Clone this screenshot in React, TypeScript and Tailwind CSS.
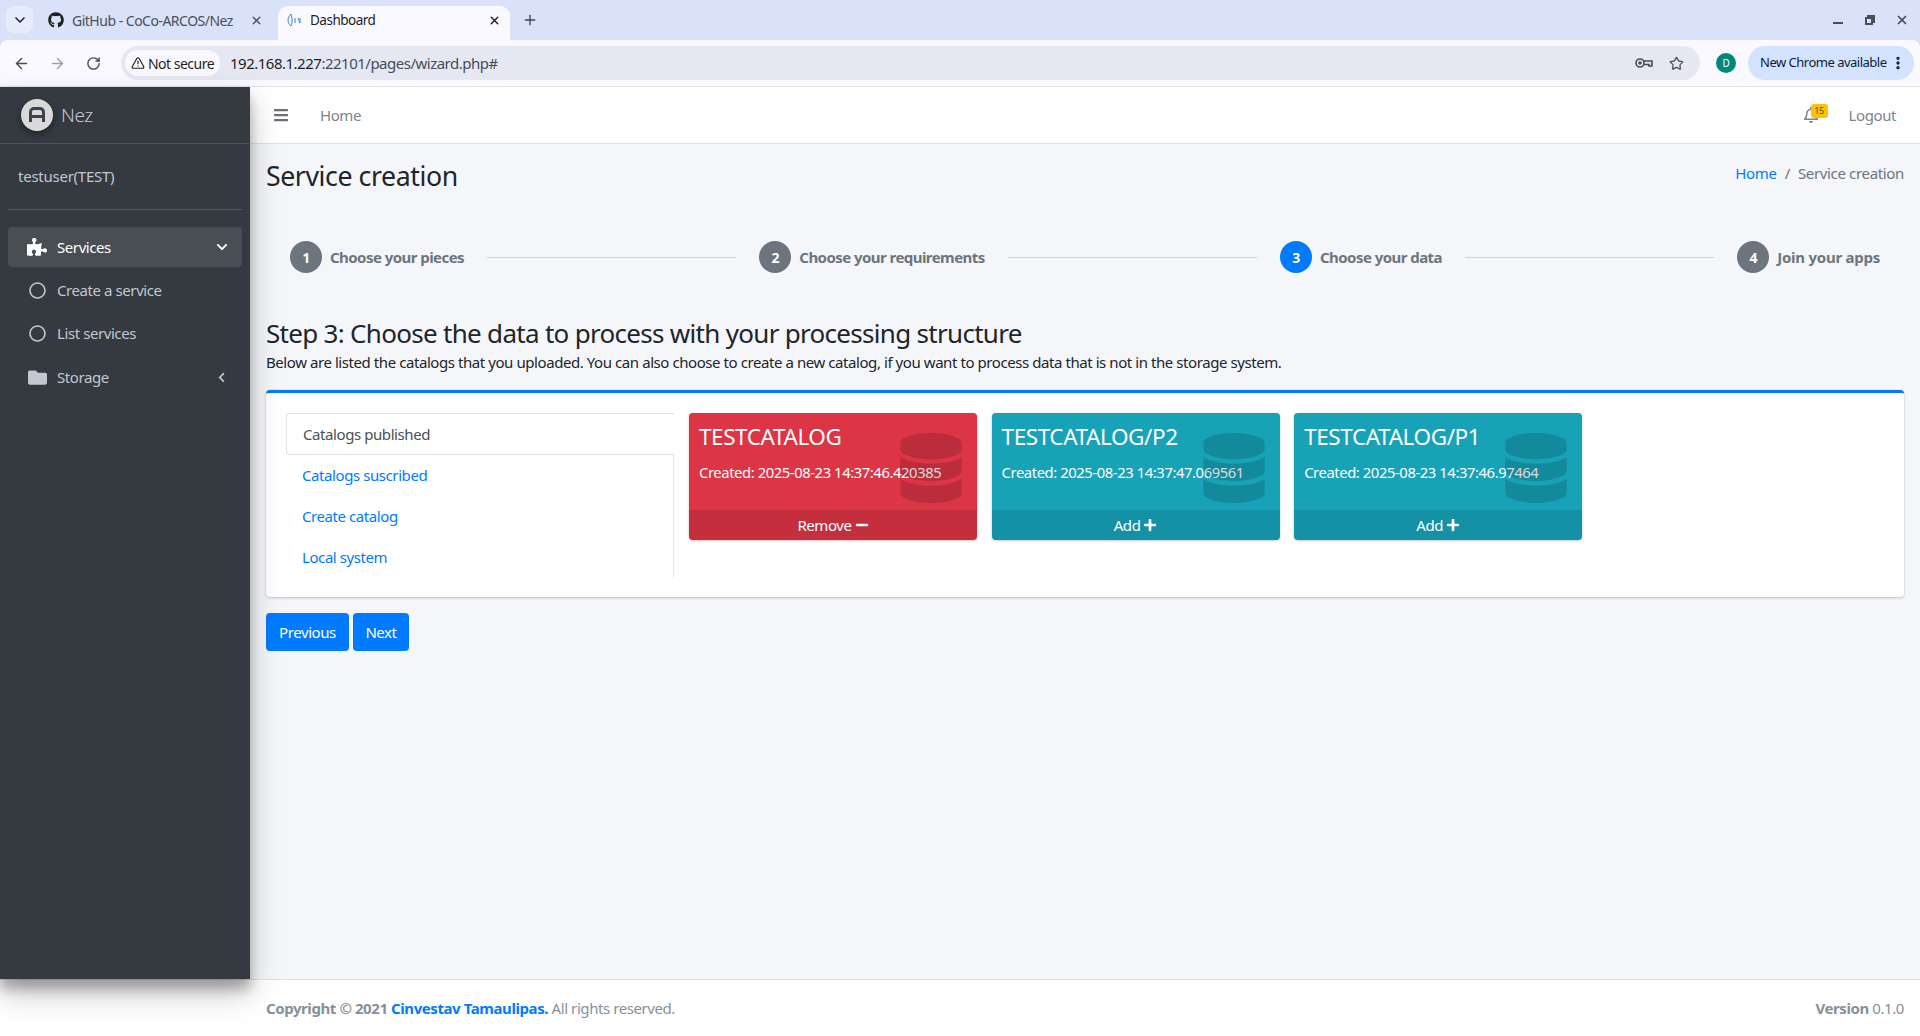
import { Fragment } from "react";
import {
  ArrowLeft,
  ArrowRight,
  ChevronDown,
  MoreVertical,
  Plus,
  RotateCw,
  Star,
  TriangleAlert,
  X,
} from "lucide-react";
import {
  FaBars,
  FaChevronDown,
  FaChevronLeft,
  FaDatabase,
  FaFolder,
  FaGithub,
  FaMinus,
  FaPlus,
  FaPuzzlePiece,
  FaRegBell,
  FaRegCircle,
} from "react-icons/fa";

const steps = [
  { n: 1, label: "Choose your pieces", active: false },
  { n: 2, label: "Choose your requirements", active: false },
  { n: 3, label: "Choose your data", active: true },
  { n: 4, label: "Join your apps", active: false },
];

const catalogs = [
  { name: "TESTCATALOG", created: "2025-08-23 14:37:46.420385", selected: true },
  { name: "TESTCATALOG/P2", created: "2025-08-23 14:37:47.069561", selected: false },
  { name: "TESTCATALOG/P1", created: "2025-08-23 14:37:46.97464", selected: false },
];

function BrowserChrome() {
  return (
    <div className="h-[87px] shrink-0 bg-[#d9e2f8] tracking-[-0.5px]">
      {/* Tab strip */}
      <div className="flex h-10 items-end pl-[6px]">
        <div className="mb-[7px] flex h-[27px] w-[27px] items-center justify-center rounded-lg bg-[#e6ecfb]">
          <ChevronDown className="h-4 w-4 text-[#1f2937]" strokeWidth={2.5} />
        </div>
        <div className="flex h-[34px] w-[245px] items-center pb-[6px] pl-[15px] pr-[15px] text-[14px] text-[#4a4f57]">
          <FaGithub className="h-4 w-4 text-[#1f1f1f]" />
          <span className="ml-2 flex-1">GitHub - CoCo-ARCOS/Nez</span>
          <X className="h-[13px] w-[13px]" strokeWidth={2.5} />
        </div>
        <div className="flex h-[34px] w-[232px] items-center rounded-t-[10px] bg-[#f9f9ff] pb-[6px] pl-2 pr-[9px] text-[13.5px] text-[#1f1f1f]">
          <svg viewBox="0 0 16 16" className="h-4 w-4 text-[#3a83c9]" fill="none" stroke="currentColor">
            <path d="M5 2 C1 6 1 11 5 14 C7 10 6 6 5 2Z" />
            <path d="M9 6v5M12 6l2 5M14 6v5" />
          </svg>
          <span className="ml-2 flex-1">Dashboard</span>
          <X className="h-[13px] w-[13px]" strokeWidth={2.5} />
        </div>
        <Plus className="mb-[12px] ml-3 h-4 w-4 text-[#3f4450]" strokeWidth={2} />
        <div className="mb-[13px] ml-auto flex h-[14px] items-center pr-[11px] text-[#4a4f57]">
          <div className="mt-[6px] h-[2px] w-[10px] bg-[#4a4f57]" />
          <svg viewBox="0 0 10 10" className="ml-[22px] h-[10px] w-[10px]" fill="none" stroke="currentColor" strokeWidth="2">
            <path d="M3 2V1h6v6H8" />
            <rect x="1" y="3" width="6" height="6" />
          </svg>
          <X className="ml-[20px] h-[14px] w-[14px]" strokeWidth={3} />
        </div>
      </div>
      {/* Toolbar */}
      <div className="flex h-[47px] items-center rounded-t-lg border-b border-[#dfe1ea] bg-[#f9f9ff] pl-[13px] pr-[6px]">
        <ArrowLeft className="h-[17px] w-[17px] text-[#474c55]" strokeWidth={2} />
        <ArrowRight className="ml-[19px] h-[17px] w-[17px] text-[#9ea1a8]" strokeWidth={2} />
        <RotateCw className="ml-5 h-[15px] w-[15px] text-[#474c55]" strokeWidth={2.2} />
        <div className="ml-5 flex h-[34px] flex-1 items-center rounded-full bg-[#e5e8f3] pl-1 pr-[16px]">
          <div className="flex h-[26px] w-[95px] items-center justify-center gap-[3px] rounded-full bg-[#f9f9ff] text-[14px] text-[#1f1f1f]">
            <TriangleAlert className="h-[14px] w-[14px]" />
            Not secure
          </div>
          <span className="ml-[10px] flex-1 text-[15px] text-[#474c55]">
            <span className="text-[#1f1f1f]">192.168.1.227</span>:22101/pages/wizard.php#
          </span>
          <svg viewBox="0 0 18 10" className="h-[10px] w-[18px] text-[#474c55]" fill="none" stroke="currentColor" strokeWidth="1.6">
            <circle cx="5" cy="5" r="4" />
            <circle cx="5" cy="5" r="1" fill="currentColor" />
            <path d="M9 3h8v5h-3V6.500H9" />
          </svg>
          <Star className="ml-[16px] h-[15px] w-[15px] text-[#474c55]" strokeWidth={2} />
        </div>
        <div className="ml-4 flex h-5 w-5 items-center justify-center rounded-full bg-[#00897b] text-[10px] text-white">
          D
        </div>
        <div className="ml-3 flex h-[34px] w-[166px] items-center rounded-full bg-[#d3e3fd] pl-3 pr-[8px] text-[13px] text-[#0b1d3a]">
          <span className="flex-1">New Chrome available</span>
          <MoreVertical className="h-4 w-4" strokeWidth={3} />
        </div>
      </div>
    </div>
  );
}

function Sidebar() {
  return (
    <aside className="relative z-10 flex w-[250px] shrink-0 flex-col bg-[#343a40] shadow-[0_14px_28px_rgba(0,0,0,0.25),0_10px_10px_rgba(0,0,0,0.22)]">
      <div className="flex h-[57px] items-center border-b border-[#4b545c] pl-[21px]">
        <div className="flex h-8 w-8 items-center justify-center rounded-full bg-[#d9d9d9] shadow-[0_3px_6px_rgba(0,0,0,0.4)]">
          <svg viewBox="0 0 20 20" className="h-5 w-5" fill="none" stroke="#3d4349" strokeWidth="3">
            <path d="M3.5 17V7a3.5 3.5 0 0 1 3.5-3.500h6A3.500 3.500 0 0 1 16.500 7v10M3.500 11.500h13" />
          </svg>
        </div>
        <span className="ml-2 text-[19px] font-light text-[#c2c7d0]">Nez</span>
      </div>
      <div className="mx-2 flex h-[66px] items-center border-b border-[#4f5962] pb-px pl-[10px] tracking-[-0.25px] text-[#c2c7d0]">
        testuser(TEST)
      </div>
      <nav className="mt-[17px] px-2 text-[#c2c7d0]">
        <div className="flex h-10 items-center rounded bg-[#494e53] pl-[19px] pr-[14px] text-white">
          <FaPuzzlePiece className="h-5 w-5" />
          <span className="ml-[10px] flex-1">Services</span>
          <FaChevronDown className="h-3 w-3" />
        </div>
        <div className="mt-[3px] flex h-10 items-center pl-[21px]">
          <FaRegCircle className="h-[17px] w-[17px]" />
          <span className="ml-[11px]">Create a service</span>
        </div>
        <div className="mt-[3px] flex h-10 items-center pl-[21px]">
          <FaRegCircle className="h-[17px] w-[17px]" />
          <span className="ml-[11px]">List services</span>
        </div>
        <div className="mt-1 flex h-10 items-center pl-5 pr-[15px]">
          <FaFolder className="h-[19px] w-[19px]" />
          <span className="ml-[10px] flex-1">Storage</span>
          <FaChevronLeft className="h-[11px] w-[11px]" />
        </div>
      </nav>
    </aside>
  );
}

function Stepper() {
  return (
    <div className="mt-[23px] flex h-12 items-center px-[24px]">
      {steps.map((step, i) => (
        <Fragment key={step.n}>
          <div
            className={
              step.active
                ? "flex h-8 w-8 items-center justify-center rounded-full bg-[#007bff] text-[14px] font-bold text-white"
                : "flex h-8 w-8 items-center justify-center rounded-full bg-[#6c757d] text-[14px] font-bold text-white"
            }
          >
            {step.n}
          </div>
          <span
            className={
              i < 3
                ? "ml-2 text-[15px] font-bold tracking-[-0.55px] text-[#6c757d]"
                : "ml-2 text-[15px] font-bold tracking-[-0.25px] text-[#6c757d]"
            }
          >
            {step.label}
          </span>
          {i < 3 && <div className="mx-[23px] h-px flex-1 bg-[#cfd3d8]" />}
        </Fragment>
      ))}
    </div>
  );
}

function CatalogCard({ name, created, selected }: { name: string; created: string; selected: boolean }) {
  return (
    <div
      className={
        selected
          ? "relative h-[127px] w-[288px] overflow-hidden rounded bg-[#dc3545] text-white shadow-[0_0_1px_rgba(0,0,0,0.125),0_1px_3px_rgba(0,0,0,0.2)]"
          : "relative h-[127px] w-[288px] overflow-hidden rounded bg-[#17a2b8] text-white shadow-[0_0_1px_rgba(0,0,0,0.125),0_1px_3px_rgba(0,0,0,0.2)]"
      }
    >
      <div className="h-[97px] px-[10px] pt-[7px]">
        <div className="text-[22.500px] leading-[34px]">{name}</div>
        <div className="mt-[6px] whitespace-nowrap text-[14.800px] leading-[24px]">Created: {created}</div>
      </div>
      <div className="flex h-[30px] items-center justify-center gap-[3px] bg-black/10 text-[15px]">
        {selected ? "Remove" : "Add"}
        {selected ? <FaMinus className="h-[14px] w-[14px]" /> : <FaPlus className="h-[14px] w-[14px]" />}
      </div>
      {/* the database watermark lies over the date text */}
      <FaDatabase className="absolute right-[15px] top-[20px] h-[70px] w-[62px] text-black/15" />
    </div>
  );
}

function MainContent() {
  return (
    <div className="flex min-w-0 flex-1 flex-col">
      <header className="flex h-[57px] shrink-0 items-center border-b border-[#dee2e6] bg-white pl-6 pr-6 text-[#7d8389]">
        <FaBars className="h-4 w-[14px] text-[#6c7177]" />
        <span className="ml-8">Home</span>
        <div className="relative ml-auto mr-[30px]">
          <FaRegBell className="h-4 w-4 text-[#7d8389]" />
          <span className="absolute -right-[9px] -top-[3px] flex h-[14px] w-[17px] items-center justify-center rounded-[3px] bg-[#ffc107] text-[9px] text-[#4b4b3c]">
            15
          </span>
        </div>
        <span>Logout</span>
      </header>
      <main className="flex-1 bg-[#f4f6f9] px-4">
        <div className="flex h-[66px] items-center justify-between">
          <h1 className="-mt-[2px] text-[26.700px] leading-none text-[#212529]">Service creation</h1>
          <div className="mt-[-8px] tracking-[-0.34px] text-[#6c757d]">
            <span className="text-[#007bff]">Home</span>
            <span className="mx-2">/</span>
            Service creation
          </div>
        </div>
        <Stepper />
        <h2 className="mt-[35px] text-[26px] leading-[34px] tracking-[-0.7px] text-[#212529]">
          Step 3: Choose the data to process with your processing structure
        </h2>
        <p className="leading-[24px] tracking-[-0.43px] text-[#212529]">
          Below are listed the catalogs that you uploaded. You can also choose to create a new catalog, if you want to
          process data that is not in the storage system.
        </p>
        <section className="mt-4 flex h-[207px] gap-[15px] rounded border-t-[3px] border-[#007bff] bg-white pl-5 pt-5 shadow-[0_0_1px_rgba(0,0,0,0.125),0_1px_3px_rgba(0,0,0,0.2)]">
          <div className="h-[164px] w-[388px] border-r border-[#dee2e6] text-[#007bff]">
            <div className="mr-[-1px] flex h-[42px] items-center rounded-l border border-r-0 border-[#dee2e6] bg-white pl-4 text-[#495057]">
              Catalogs published
            </div>
            <div className="flex h-[41px] items-center pl-4">Catalogs suscribed</div>
            <div className="flex h-[41px] items-center pl-4">Create catalog</div>
            <div className="flex h-[41px] items-center pl-4">Local system</div>
          </div>
          <div className="flex gap-[14.600px]">
            {catalogs.map((c) => (
              <CatalogCard key={c.name} {...c} />
            ))}
          </div>
        </section>
        <div className="mt-4 flex gap-1">
          <button className="h-[38px] w-[83px] rounded bg-[#007bff] text-white">Previous</button>
          <button className="h-[38px] w-[56px] rounded bg-[#007bff] text-white">Next</button>
        </div>
      </main>
    </div>
  );
}

export default function App() {
  return (
    <div className="flex h-[1036px] w-[1920px] flex-col overflow-hidden bg-white font-['Noto_Sans',sans-serif] text-[15px] tracking-[-0.028em]">
      <BrowserChrome />
      <div className="flex min-h-0 flex-1">
        <Sidebar />
        <MainContent />
      </div>
      <footer className="flex h-[57px] shrink-0 items-center border-t border-[#dee2e6] bg-white pl-[266px] pr-4 text-[#869099]">
        <span>
          <b>Copyright © 2021 </b>
          <b className="text-[#007bff]">Cinvestav Tamaulipas.</b> All rights reserved.
        </span>
        <span className="ml-auto">
          <b>Version</b> 0.1.0
        </span>
      </footer>
    </div>
  );
}
